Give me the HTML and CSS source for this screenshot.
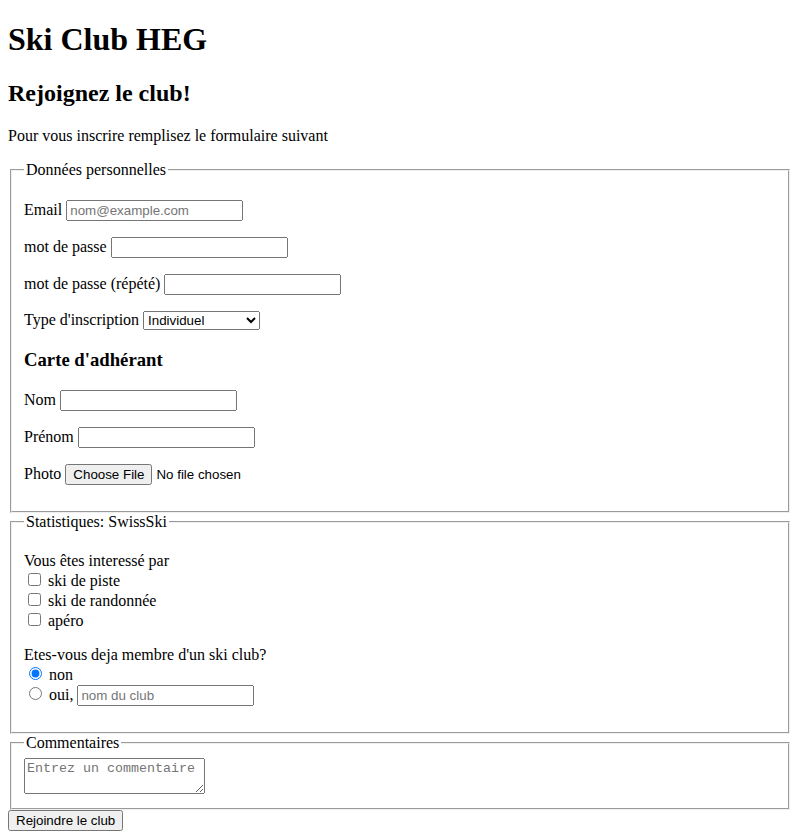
FILE: index.html
```html
<!DOCTYPE html>
<html lang="fr">
<head>
<meta charset="utf-8">
<title>Ski Club HEG</title>
<link rel="stylesheet" href="styles.css">
</head>
<body>
<h1>Ski Club HEG</h1>
<h2>Rejoignez le club!</h2>
<p>Pour vous inscrire remplisez le formulaire suivant</p>
<form>
  <fieldset>
    <legend>Données personnelles</legend>
    <p><label for="email">Email</label> <input class="field" type="email" id="email" placeholder="nom@example.com"></p>
    <p><label for="pw">mot de passe</label> <input class="field" type="password" id="pw"></p>
    <p><label for="pw2">mot de passe (répété)</label> <input class="field" type="password" id="pw2"></p>
    <p><label for="type">Type d'inscription</label> <select class="choice" id="type">
      <option>Individuel</option>
      <option>Famille</option>
    </select></p>
    <h3>Carte d'adhérant</h3>
    <p><label for="nom">Nom</label> <input class="field" type="text" id="nom"></p>
    <p><label for="prenom">Prénom</label> <input class="field" type="text" id="prenom"></p>
    <p><label for="photo">Photo</label> <input class="file" type="file" id="photo"></p>
  </fieldset>
  <fieldset>
    <legend>Statistiques: SwissSki</legend>
    <p>Vous êtes interessé par<br>
      <input type="checkbox" id="c1"> <label for="c1">ski de piste</label><br>
      <input type="checkbox" id="c2"> <label for="c2">ski de randonnée</label><br>
      <input type="checkbox" id="c3"> <label for="c3">apéro</label>
    </p>
    <p>Etes-vous deja membre d'un ski club?<br>
      <input type="radio" name="m" id="r1" checked> <label for="r1">non</label><br>
      <input type="radio" name="m" id="r2"> <label for="r2">oui,</label> <input class="field" type="text" placeholder="nom du club">
    </p>
  </fieldset>
  <fieldset>
    <legend>Commentaires</legend>
    <textarea class="comment" placeholder="Entrez un commentaire"></textarea>
  </fieldset>
  <button class="submit" type="submit">Rejoindre le club</button>
</form>
</body>
</html>
```
FILE: styles.css
```css
body {
  font-family: "Liberation Serif", serif;
  margin: 0 8px 8px;
}
input, select, button {
  font-family: "Liberation Sans", Arial, sans-serif;
  font-size: 13.333px;
}
.field {
  width: 177px;
  box-sizing: border-box;
}
.choice {
  width: 117px;
}
.comment {
  font-family: "Liberation Mono", monospace;
  font-size: 13.333px;
  width: 181px;
  height: 36px;
  box-sizing: border-box;
}
```
